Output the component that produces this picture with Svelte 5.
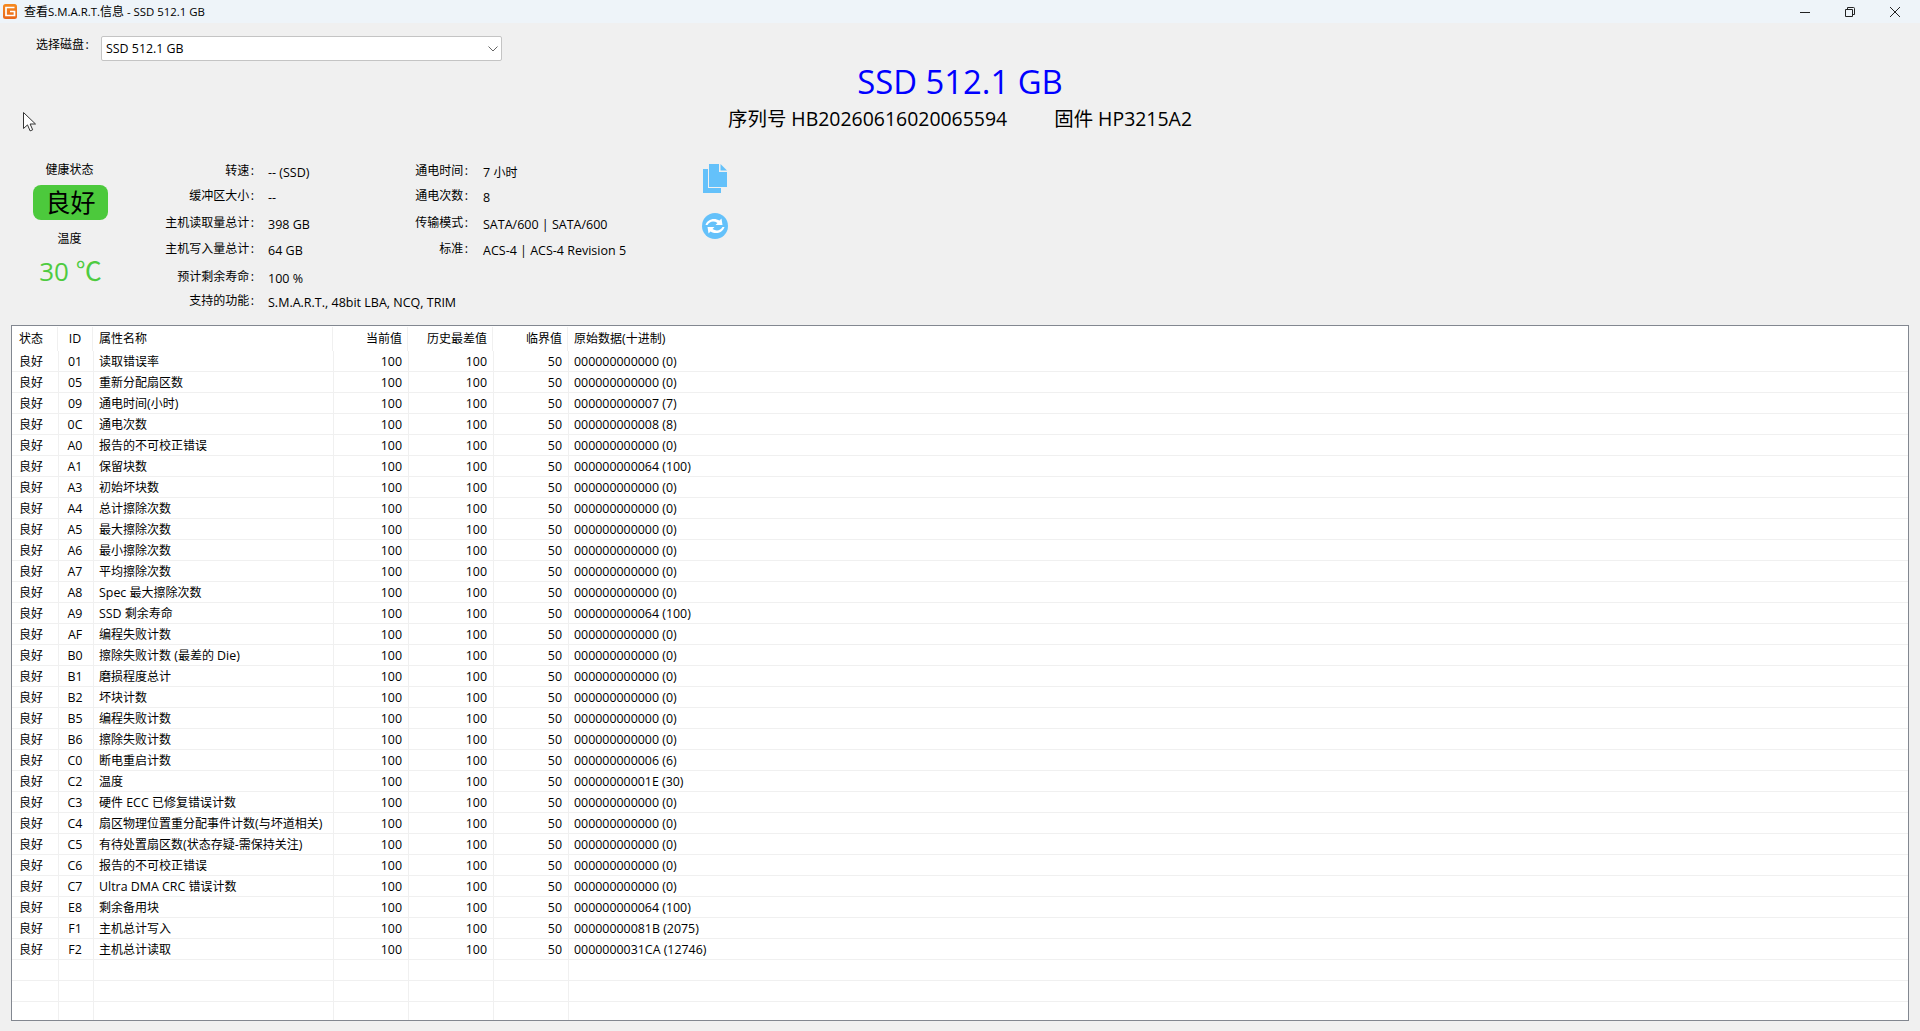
<script>
  const groups = [
    ['01','读取错误率','000000000000 (0)'],['05','重新分配扇区数','000000000000 (0)'],['09','通电时间(小时)','000000000007 (7)'],
    ['0C','通电次数','000000000008 (8)'],['A0','报告的不可校正错误','000000000000 (0)'],['A1','保留块数','000000000064 (100)'],
    ['A3','初始坏块数','000000000000 (0)'],['A4','总计擦除次数','000000000000 (0)'],['A5','最大擦除次数','000000000000 (0)'],
    ['A6','最小擦除次数','000000000000 (0)'],['A7','平均擦除次数','000000000000 (0)'],['A8','Spec 最大擦除次数','000000000000 (0)'],
    ['A9','SSD 剩余寿命','000000000064 (100)'],['AF','编程失败计数','000000000000 (0)'],['B0','擦除失败计数 (最差的 Die)','000000000000 (0)'],
    ['B1','磨损程度总计','000000000000 (0)'],['B2','坏块计数','000000000000 (0)'],['B5','编程失败计数','000000000000 (0)'],
    ['B6','擦除失败计数','000000000000 (0)'],['C0','断电重启计数','000000000006 (6)'],['C2','温度','00000000001E (30)'],
    ['C3','硬件 ECC 已修复错误计数','000000000000 (0)'],['C4','扇区物理位置重分配事件计数(与坏道相关)','000000000000 (0)'],
    ['C5','有待处置扇区数(状态存疑-需保持关注)','000000000000 (0)'],['C6','报告的不可校正错误','000000000000 (0)'],
    ['C7','Ultra DMA CRC 错误计数','000000000000 (0)'],['E8','剩余备用块','000000000064 (100)'],
    ['F1','主机总计写入','00000000081B (2075)'],['F2','主机总计读取','0000000031CA (12746)']
  ];
  const blanks = [1, 2, 3];
  const left = [['转速:','-- (SSD)'],['缓冲区大小:','--'],['主机读取量总计:','398 GB'],['主机写入量总计:','64 GB'],['预计剩余寿命:','100 %'],['支持的功能:','S.M.A.R.T., 48bit LBA, NCQ, TRIM']];
  const right = [['通电时间:','7 小时'],['通电次数:','8'],['传输模式:','SATA/600 | SATA/600'],['标准:','ACS-4 | ACS-4 Revision 5']];
  const parts = (s) => s.match(/[\x00-\x7f]+|[^\x00-\x7f]+/g) ?? [];
  const isLatin = (s) => s.charCodeAt(0) < 128;
</script>

{#snippet mixed(s)}{#each parts(s) as p}<span class:lat={isLatin(p)}>{p}</span>{/each}{/snippet}

<div class="page">
  <header class="titlebar">
    <svg class="appicon" viewBox="0 0 14 15" width="14" height="15" aria-hidden="true">
      <defs><linearGradient id="ai" x1="0" y1="0" x2="0" y2="1"><stop offset="0" stop-color="#f58a1f"/><stop offset="1" stop-color="#e9661a"/></linearGradient></defs>
      <rect width="14" height="15" rx="2.5" fill="url(#ai)"/>
      <path d="M11.500 3.500H3v8h8.500V7.500H7" fill="none" stroke="#fff" stroke-width="1.700"/>
    </svg>
    <span class="wintitle"><span>查看</span><span class="tl">S.M.A.R.T.</span><span>信息</span><span class="tl">{' - SSD 512.1 GB'}</span></span>
    <div class="winbtns">
      <svg viewBox="0 0 10 10" width="10" height="10"><path d="M-1 5.500h11" stroke="#222" fill="none"/></svg>
      <svg viewBox="0 0 10 10" width="10" height="10"><path d="M.5 2.500h7v7h-7zM2.500 2V.5h6q1 0 1 1v6H8" stroke="#222" fill="none"/></svg>
      <svg viewBox="0 0 10 10" width="10" height="10"><path d="M0 0l10 10M10 0L0 10" stroke="#222" fill="none"/></svg>
    </div>
  </header>

  <section class="head">
    <div class="picker">
      <span class="picklabel">{@render mixed('选择磁盘:')}</span>
      <div class="select">
        <span class="lat">SSD 512.1 GB</span>
        <svg viewBox="0 0 10 6" width="10" height="6"><path d="M.5.5L5 5l4.500-4.500" stroke="#666" fill="none"/></svg>
      </div>
    </div>
    <div class="headline">
      <h1>SSD 512.1 GB</h1>
      <div class="sub"><span>序列号 HB20260616020065594</span><span>固件 HP3215A2</span></div>
    </div>
  </section>

  <svg class="cursor" viewBox="0 0 13 20" width="13" height="20" aria-hidden="true">
    <path d="M.5.5v16l4-3.600 2.600 6 2.600-1.100-2.600-5.800h5.400z" fill="#fff" stroke="#333"/>
  </svg>

  <section class="info">
    <div class="health">
      <div class="hlabel">健康状态</div>
      <div class="badge">良好</div>
      <div class="hlabel temp">温度</div>
      <div class="deg">30 ℃</div>
    </div>
    <div class="facts">
      {#each left as [k, v]}
        <div class="k">{@render mixed(k)}</div><div class="v">{@render mixed(v)}</div>
      {/each}
    </div>
    <div class="facts second">
      {#each right as [k, v]}
        <div class="k">{@render mixed(k)}</div><div class="v">{@render mixed(v)}</div>
      {/each}
    </div>
    <div class="tools">
      <svg viewBox="0 0 24 29" width="24" height="29" aria-hidden="true">
        <path d="M0 5h5v19h13v5H0z" fill="#64c1fa"/>
        <path d="M6 0h10v8h8v15H6z" fill="#64c1fa"/>
        <path d="M17.500 0L24 6.500h-6.500z" fill="#64c1fa"/>
      </svg>
      <svg class="refresh" viewBox="0 0 26 26" width="26" height="26" aria-hidden="true">
        <circle cx="13" cy="13" r="13" fill="#64c1fa"/>
        <path d="M3.500 12C5 6.500 12 4 17.500 7.500L19.500 5.500l1 6.500h-7l2-2C11.500 7.500 7.500 8.500 5.500 12z" fill="#fff"/>
        <path d="M22.500 14C21 19.500 14 22 8.500 18.500L6.500 20.500l-1-6.500h7l-2 2C14.500 18.500 18.500 17.500 20.500 14z" fill="#fff"/>
      </svg>
    </div>
  </section>

  <section class="list">
    <div class="hrow">
      <div class="c">状态</div><div class="c ctr lat">ID</div><div class="c nm">属性名称</div>
      <div class="c r">当前值</div><div class="c r">历史最差值</div><div class="c r">临界值</div><div class="c nm last">{@render mixed('原始数据(十进制)')}</div>
    </div>
    {#each groups as [id, name, raw]}
      <div class="row">
        <div class="c">良好</div><div class="c ctr lat">{id}</div><div class="c nm">{@render mixed(name)}</div>
        <div class="c r lat">100</div><div class="c r lat">100</div><div class="c r lat">50</div><div class="c nm lat last">{raw}</div>
      </div>
    {/each}
    {#each blanks as b (b)}
      <div class="row"><div class="c"></div><div class="c"></div><div class="c"></div><div class="c"></div><div class="c"></div><div class="c"></div><div class="c last"></div></div>
    {/each}
  </section>
</div>

<style>
  :global(body) { margin: 0; background: #f0f0f0; }
  .page {
    height: 1031px; display: flex; flex-direction: column; overflow: hidden; position: relative;
    background: #f0f0f0; color: #000;
    font-family: "Open Sans", "Noto Sans CJK SC", sans-serif; font-size: 12px;
  }
  .lat { font-size: 12.4px; }
  .titlebar { height: 23px; flex: none; display: flex; align-items: center; background: #eef4f9; padding-left: 3px; }
  .appicon { margin-right: 7px; }
  .wintitle { font-size: 12px; line-height: 22px; }
  .tl { font-size: 11.4px; white-space: pre; }
  .winbtns { margin-left: auto; display: flex; gap: 35px; padding-right: 20px; }
  .head { height: 127px; flex: none; display: grid; grid-template-columns: 1fr auto 1fr; }
  .picker { display: flex; align-items: flex-start; padding-top: 13px; }
  .picklabel { margin-left: 36px; width: 65px; line-height: 18px; white-space: nowrap; }
  .picklabel .lat, .k .lat { margin-left: 1.5px; }
  .select {
    width: 392px; height: 23px; background: #fff; border: 1px solid #c4c4c4; border-radius: 2px;
    display: flex; align-items: center; justify-content: space-between; padding: 0 3px 0 4px;
  }
  .headline { text-align: center; padding-top: 38px; }
  h1 { margin: 0; color: #0000ff; font-size: 32.8px; font-weight: 400; line-height: 42px; }
  .sub { display: flex; gap: 47px; font-size: 19.45px; line-height: 26px; margin-top: 3px; color: #000; }
  .cursor { position: absolute; left: 23px; top: 112px; }
  .info { height: 175px; flex: none; display: flex; align-items: flex-start; }
  .health { width: 141px; flex: none; display: flex; flex-direction: column; align-items: center; }
  .hlabel { line-height: 20px; margin-top: 10px; padding-right: 2px; }
  .badge {
    width: 75px; height: 35px; margin-top: 5px; border-radius: 8px; background: #4cc93c; color: #000;
    font-size: 25px; line-height: 35px; text-align: center;
  }
  .temp { margin-top: 9px; }
  .deg { color: #4ecb40; font-size: 26px; line-height: 36px; margin-top: 4px; }
  .facts {
    width: 251px; flex: none; display: grid; grid-template-columns: 113px 1fr; column-gap: 14px;
    padding-top: 11px; grid-template-rows: 25px 27px 26px 28px 24px 26px; white-space: nowrap;
  }
  .second { width: 330px; margin-left: -54px; grid-template-columns: 130px 1fr; column-gap: 15px; }
  .k { text-align: right; line-height: 20px; }
  .v { line-height: 20px; padding-top: 2px; }
  .v .lat { font-size: 12.5px; }
  .tools { display: flex; flex-direction: column; gap: 20px; margin-left: 33px; padding-top: 14px; align-items: center; }
  .refresh { margin-left: 1px; }
  .list {
    flex: none; height: 694px; margin: 0 11px; border: 1px solid #828790; background: #fff; overflow: hidden;
  }
  .hrow, .row { display: grid; padding-right: 1px; }
  .hrow { grid-template-columns: 46px 35px 240px 75px 85px 75px 1fr; height: 25px; line-height: 25px; }
  .row { grid-template-columns: 47px 35px 240px 75px 85px 75px 1fr; height: 20px; line-height: 20px; border-bottom: 1px solid #f0f0f0; }
  .hrow .c { border-right: 1px solid #f0f0f0; margin-top: 1px; line-height: 24px; }
  .row .c { border-right: 1px solid #f0f0f0; padding-top: 1px; }
  .c { padding: 0 6px 0 7px; min-width: 0; white-space: nowrap; overflow: hidden; box-sizing: border-box; }
  .c.last { border-right: 0; }
  .ctr { text-align: center; padding: 0; }
  .row .ctr { padding-right: 2px; }
  .nm { padding-left: 5px; }
  .hrow .nm { padding-left: 6px; }
  .hrow .r { padding-right: 5px; }
  .r { text-align: right; }
</style>
